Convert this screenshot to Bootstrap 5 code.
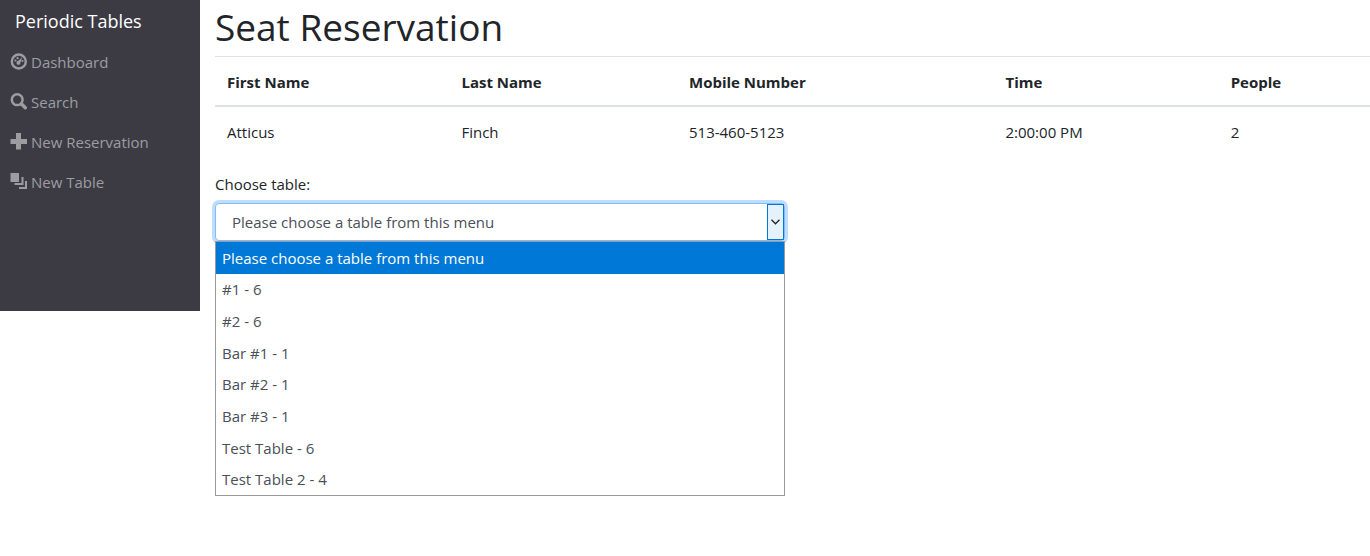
<!DOCTYPE html>
<html lang="en">
<head>
<meta charset="utf-8">
<meta name="viewport" content="width=device-width, initial-scale=1">
<title>Periodic Tables</title>
<link href="https://cdn.jsdelivr.net/npm/bootstrap@5.3.0/dist/css/bootstrap.min.css" rel="stylesheet">
<style>
  body { font-family: "Segoe UI", "Open Sans", sans-serif; font-size: 15px; line-height: 24px; color: #212529; }
  .side { width: 200px; min-height: 311px; background: #3c3b44; }
  .brand { font-size: 18px; line-height: 26px; padding: 8px 15px; }
  .side .nav-link { color: #9d9da1; padding: 8px 10px; gap: 4px; }
  .side .nav-link:hover { color: #fff; }
  .side svg { width: 17px; height: 17px; flex: none; margin-bottom: 2px; }
  .inset { padding-left: 15px; }
  h1 { font-size: 37px; line-height: 54px; font-weight: 400; margin: 0; padding-bottom: 2px; }
  .seats { --bs-table-color: #212529; --bs-border-color: #dee2e6; border-top: 1px solid #dee2e6; }
  .seats th, .seats td { padding: 13px 12px 12px; border: 0; }
  .seats th { padding-bottom: 11px; border-bottom: 2px solid #dee2e6; }
  .pick-label { margin-bottom: 7px; }
  .picker { height: 38px; padding: 0 16px; color: #495057; border: 1px solid #80bdff; border-radius: 4px; box-shadow: 0 0 0 3px #bfdeff; font-size: 15px; background: #fff; }
  .arrow { top: 1px; right: 1px; bottom: 1px; width: 17px; background: #e5f1fb; border: 1px solid #0078d7; pointer-events: none; }
  .options { top: 100%; left: 0; right: 0; height: 255px; border: 1px solid #9a9a9a; background: #fff; color: #495057; }
  .options li { padding: 0 6px; }
  .options .chosen { background: #0078d7; color: #fff; }
</style>
</head>
<body>
<div class="d-flex align-items-start min-vh-100">
  <nav class="side flex-shrink-0" aria-label="Main">
    <a class="brand d-block text-white text-decoration-none" href="#">Periodic Tables</a>
    <ul class="nav flex-column">
      <li class="nav-item"><a class="nav-link d-flex align-items-center" href="#">
        <svg viewBox="0 0 17 17" fill="currentColor" aria-hidden="true"><circle cx="8.800" cy="8.500" r="7" fill="none" stroke="currentColor" stroke-width="2.400"/><circle cx="5.400" cy="7.500" r="1.100"/><circle cx="7.600" cy="5.200" r="1.100"/><circle cx="12.400" cy="8" r="1.100"/><path d="M12.200 4.200 10.400 9.400a2 2 0 1 1-2-1.600z"/></svg>
        Dashboard</a></li>
      <li class="nav-item"><a class="nav-link d-flex align-items-center" href="#">
        <svg viewBox="0 0 17 17" fill="none" stroke="currentColor" aria-hidden="true"><circle cx="7.200" cy="6.700" r="5.400" stroke-width="2.500"/><path d="m11.500 11 3.800 3.800" stroke-width="3.400" stroke-linecap="round"/></svg>
        Search</a></li>
      <li class="nav-item"><a class="nav-link d-flex align-items-center" href="#">
        <svg viewBox="0 0 17 17" fill="currentColor" aria-hidden="true"><path d="M6 0h5v6h6v5h-6v5.500H6V11H.500V6H6z"/></svg>
        New Reservation</a></li>
      <li class="nav-item"><a class="nav-link d-flex align-items-center" href="#">
        <svg viewBox="0 0 17 17" fill="currentColor" aria-hidden="true"><path d="M.500 0H9v9H.500zM11.500 4h2v8h-9v-2h7zM15 8h2v8H9v-2h6z"/></svg>
        New Table</a></li>
    </ul>
  </nav>
  <main class="flex-grow-1">
    <div class="inset">
      <h1>Seat Reservation</h1>
      <table class="table seats mb-3">
        <colgroup><col style="width:20.3%"><col style="width:19.7%"><col style="width:27.4%"><col style="width:19.5%"><col style="width:13.1%"></colgroup>
        <thead><tr><th scope="col">First Name</th><th scope="col">Last Name</th><th scope="col">Mobile Number</th><th scope="col">Time</th><th scope="col">People</th></tr></thead>
        <tbody><tr><td>Atticus</td><td>Finch</td><td>513-460-5123</td><td>2:00:00 PM</td><td>2</td></tr></tbody>
      </table>
    </div>
    <form class="w-50 inset">
      <label class="pick-label d-block" for="table_id">Choose table:</label>
      <div class="position-relative">
        <select class="form-select picker" id="table_id">
          <option>Please choose a table from this menu</option>
          <option>#1 - 6</option><option>#2 - 6</option><option>Bar #1 - 1</option><option>Bar #2 - 1</option><option>Bar #3 - 1</option><option>Test Table - 6</option><option>Test Table 2 - 4</option>
        </select>
        <span class="arrow position-absolute d-flex align-items-center justify-content-center"><svg width="9" height="6" viewBox="0 0 9 6" fill="none" stroke="#222" stroke-width="1.300" aria-hidden="true"><path d="m.500.800 4 4 4-4"/></svg></span>
        <ul class="options position-absolute list-unstyled d-flex flex-column m-0" role="listbox" aria-label="Tables">
          <li class="chosen flex-fill d-flex align-items-center" role="option" aria-selected="true">Please choose a table from this menu</li>
          <li class="flex-fill d-flex align-items-center" role="option">#1 - 6</li>
          <li class="flex-fill d-flex align-items-center" role="option">#2 - 6</li>
          <li class="flex-fill d-flex align-items-center" role="option">Bar #1 - 1</li>
          <li class="flex-fill d-flex align-items-center" role="option">Bar #2 - 1</li>
          <li class="flex-fill d-flex align-items-center" role="option">Bar #3 - 1</li>
          <li class="flex-fill d-flex align-items-center" role="option">Test Table - 6</li>
          <li class="flex-fill d-flex align-items-center" role="option">Test Table 2 - 4</li>
        </ul>
      </div>
    </form>
  </main>
</div>
<script src="https://cdn.jsdelivr.net/npm/bootstrap@5.3.0/dist/js/bootstrap.bundle.min.js"></script>
</body>
</html>
